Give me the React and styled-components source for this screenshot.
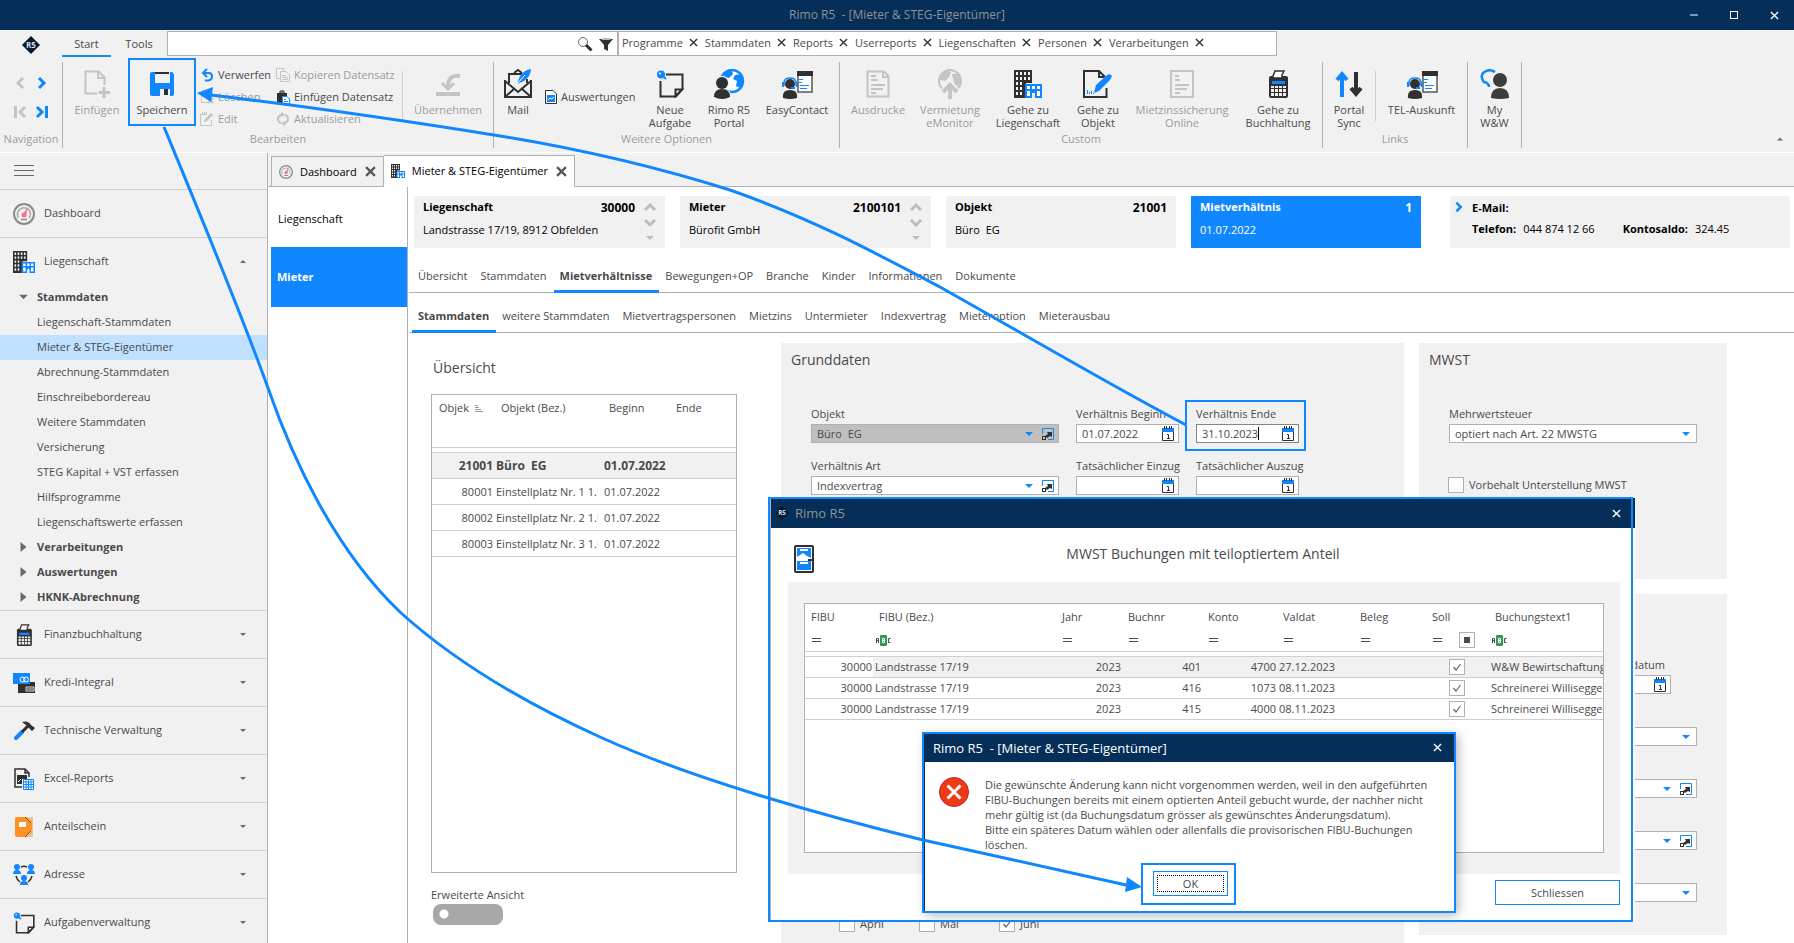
import React from "react";
import styled, { createGlobalStyle, css } from "styled-components";

const BLUE = "#1087ff";
const NAVY = "#052e58";
const GREY = "#f1f1f1";
const LINE = "#b1b1b1";
const SOFT = "#cfcfcf";
const TEXT = "#4a4a4a";
const MUTED = "#9b9b9b";
const DARK = "#303030";
const PALE = "#c4c4c4";

const GlobalStyle = createGlobalStyle`
    * {
        box-sizing: border-box;
    }
    body {
        margin: 0;
        background: white;
        color: ${TEXT};
        font-family: "Open Sans", "Noto Sans", sans-serif;
        font-size: 11px;
        line-height: 14px;
    }
    button, input, select {
        margin: 0;
        padding: 0;
        border: 0;
        background: none;
        color: inherit;
        font: inherit;
    }
    svg {
        display: block;
        flex: none;
    }
    a {
        color: inherit;
        text-decoration: none;
    }
`;

/* ---------- icons ---------- */

const Svg = ({ w, h, box, children }) => (
    <svg width={w} height={h || w} viewBox={box || `0 0 ${w} ${h || w}`} fill="none" aria-hidden="true">
        {children}
    </svg>
);

const Logo = ({ size = 18 }) => (
    <Svg w={size} box="0 0 18 18">
        <path d="M9 0L18 9L9 18L0 9Z" fill="#051a30" />
        <text x="9" y="12" textAnchor="middle" fontSize="8" fontWeight="700" fill="#d8dde4" fontFamily="Open Sans, sans-serif">R5</text>
    </Svg>
);

const Cross = ({ size = 9, color = DARK, weight = 2 }) => (
    <Svg w={size} box="0 0 10 10">
        <path d="M1 1L9 9M9 1L1 9" stroke={color} strokeWidth={weight} />
    </Svg>
);

const Chevron = ({ dir = "right", color = BLUE, bar, size = 14 }) => {
    const turn = { right: 0, down: 90, left: 180, up: 270 }[dir];
    return (
        <Svg w={size} box="0 0 14 14">
            <g transform={`rotate(${turn} 7 7)`} stroke={color} strokeWidth="3">
                <path d={bar ? "M2 2L7 7L2 12" : "M4 2L9 7L4 12"} />
                {bar && <path d="M11.500 1V13" />}
            </g>
        </Svg>
    );
};

const Triangle = ({ dir = "down", color = "#6a6a6a", w = 6, h = 4 }) => (
    <Svg w={w} h={h} box="0 0 8 4">
        <path d={dir === "down" ? "M0 0H8L4 4Z" : "M0 4H8L4 0Z"} fill={color} />
    </Svg>
);

const SideTriangle = () => (
    <Svg w={6} h={10}>
        <path d="M0 0L6 5L0 10Z" fill="#6a6a6a" />
    </Svg>
);

const NewDocIcon = () => (
    <Svg w={28} h={30}>
        <path d="M14 24.500H2.500V2.500H15.500L21.500 8.500V16M15 3V9H21" stroke={PALE} strokeWidth="2" />
        <path d="M21 18V29M15.500 23.500H27" stroke={PALE} strokeWidth="3" />
    </Svg>
);

const FloppyIcon = () => (
    <Svg w={28}>
        <path d="M2 4Q2 2 4 2H24L26 4V24Q26 26 24 26H4Q2 26 2 24Z" fill={BLUE} />
        <rect x="7" y="2" width="15" height="11" fill={GREY} />
        <rect x="7" y="2" width="14" height="2" fill={DARK} />
        <rect x="12" y="19" width="10" height="7" fill={GREY} />
        <rect x="16" y="19" width="4" height="6" fill={DARK} />
    </Svg>
);

const UndoIcon = () => (
    <Svg w={14}>
        <path d="M7 1L3 5L7 9M3 5H9Q12 5 12 8.500T8 12.500H5" stroke={BLUE} strokeWidth="2" />
    </Svg>
);

const DeleteIcon = () => (
    <Svg w={14}>
        <path d="M9 12.500H1.500V1.500H8L11.500 5V8" stroke={PALE} />
        <path d="M8 8L13 13M13 8L8 13" stroke={PALE} strokeWidth="2" />
    </Svg>
);

const EditIcon = () => (
    <Svg w={14}>
        <path d="M11.500 8V13.500H.5V2.500H7" stroke={PALE} />
        <path d="M2 1H8" stroke={PALE} strokeWidth="2" strokeDasharray="1 1" />
        <path d="M4 10L5 7L11 1L13 3L7 9Z" fill={PALE} />
    </Svg>
);

const CopyIcon = () => (
    <Svg w={14}>
        <path d="M4 10.500H.5V.5H7.500V3" stroke={PALE} />
        <path d="M4.500 3.500H10L13.500 7V13.500H4.500ZM6 7.500H10M6 9.500H12M6 11.500H12" stroke={PALE} />
    </Svg>
);

const PasteIcon = () => (
    <Svg w={14}>
        <path d="M1 3H11V6H6V14H1Z" fill={DARK} />
        <path d="M3 3Q3 0 6 0T9 3Z" fill="#707070" />
        <path d="M6.500 6.500H11L13.500 9V13.500H6.500Z" stroke={BLUE} fill="white" />
        <path d="M8 9.500H10M8 11.500H12" stroke={BLUE} />
    </Svg>
);

const RefreshIcon = () => (
    <Svg w={14}>
        <path d="M5 11Q2 10 2 7T6 2.500M9 3Q12 4 12 7T8 11.500" stroke={PALE} strokeWidth="2" />
        <path d="M5 0L9 2.500L5 5ZM9 9L5 11.500L9 14Z" fill={PALE} />
    </Svg>
);

const TakeOverIcon = () => (
    <Svg w={28}>
        <path d="M26 6Q14 4 14 17" stroke={PALE} strokeWidth="4" />
        <path d="M8 13L14 19L20 13" stroke={PALE} strokeWidth="3" />
        <path d="M2 24H26" stroke={PALE} strokeWidth="4" />
    </Svg>
);

const MailIcon = () => (
    <Svg w={28} h={30}>
        <path d="M1 11V28H27V11M1 28L11 19M27 28L17 19M1 12L14 23L27 12M5 14V5H18M10 4L14 1L18 4M23 10V14" stroke={DARK} strokeWidth="2" />
        <path d="M13 15L16 7Q20 1 27 0Q27 7 20 12Z" fill={BLUE} />
        <path d="M13 15L21 6" stroke="white" />
    </Svg>
);

const ReportIcon = () => (
    <Svg w={12} h={14}>
        <path d="M.5 .5H8L11.500 4V13.500H.5Z" stroke={DARK} fill="white" />
        <rect x="2" y="5" width="8" height="7" fill={BLUE} />
        <path d="M3 10L5 8L7 9L9 7" stroke="white" />
    </Svg>
);

const TaskIcon = ({ size = 28 }) => (
    <Svg w={size} box="0 0 28 28">
        <path d="M10 4.500H26.500V19L20 26.500H4.500V11" stroke={DARK} strokeWidth="2" />
        <path d="M26 19.500H19.500V26Z" stroke={DARK} strokeWidth="2" fill="white" />
        <circle cx="5" cy="4.500" r="4" fill={BLUE} />
        <path d="M6 5L10 9" stroke={BLUE} strokeWidth="2" />
        <circle cx="4" cy="3.500" r="1" fill="white" />
    </Svg>
);

const GlobePersonIcon = () => (
    <Svg w={32} h={30}>
        <circle cx="19" cy="12" r="11" fill="white" stroke={BLUE} strokeWidth="2.500" />
        <path d="M10 4Q14 1 19 2L20 5L16 9L12 8ZM22 6L28 5L30 12L27 19L23 17L24 12L20 10Z" fill={BLUE} />
        <path d="M1 30Q0 19 9 19T19 30Z" fill={GREY} />
        <circle cx="9" cy="14" r="7" fill={GREY} />
        <circle cx="9" cy="14" r="6" fill={DARK} />
        <path d="M1 28Q1 20 9 20T17 28Q13 30 9 30T1 28Z" fill={DARK} />
    </Svg>
);

const ContactIcon = () => (
    <Svg w={32} h={30}>
        <path d="M17 3H31V23H17Z" fill="white" stroke="#555" strokeWidth="1.500" />
        <rect x="16" y="2" width="16" height="5" fill={DARK} />
        <path d="M18 10.500H22M18 13.500H21M19 16.500H28M19 19.500H26" stroke={BLUE} />
        <circle cx="9" cy="15" r="7" fill={GREY} />
        <path d="M3 17V14Q3 9 9 9T15 14V17" stroke={BLUE} strokeWidth="1.500" />
        <circle cx="9" cy="15" r="5" fill={DARK} />
        <path d="M2 29Q1 21 9 21T16 29Q9 31 2 29Z" fill={DARK} />
        <path d="M1 13H3V18H1ZM15 13H17V18H15ZM10 18H14V20H10Z" fill={BLUE} />
    </Svg>
);

const PrintoutIcon = () => (
    <Svg w={24} h={28}>
        <path d="M1.500 1.500H18L22.500 6V26.500H1.500ZM17 2V7H22" stroke={PALE} strokeWidth="2" />
        <path d="M5 6H10M5 10H12M5 15H19M5 19H17M5 23H10" stroke={PALE} strokeWidth="2" />
    </Svg>
);

const FormIcon = () => (
    <Svg w={24} h={28}>
        <path d="M1 1H23V27H1Z" stroke={PALE} strokeWidth="2" />
        <path d="M5 6H9M5 10H10M5 15H19M5 19H17M5 23H10" stroke={PALE} strokeWidth="2" />
    </Svg>
);

const GlobeUpIcon = () => (
    <Svg w={26} h={30}>
        <circle cx="13" cy="12" r="11" stroke={PALE} strokeWidth="2" />
        <path d="M4 5Q9 0 14 3L12 8L8 12L3 11ZM15 5L22 5L24 12L21 18L17 14Z" fill={PALE} />
        <path d="M13 30V18M6 23L13 16L20 23" stroke={GREY} strokeWidth="7" />
        <path d="M13 30V18M6 23L13 16L20 23" stroke={PALE} strokeWidth="4" />
    </Svg>
);

const BuildingIcon = ({ size = 28 }) => (
    <Svg w={size} box="0 0 28 28">
        <path d="M0 0H18V13H12V28H0Z" fill={DARK} />
        <path d="M2 2H4V5H2ZM6 2H8V5H6ZM10 2H12V5H10ZM14 2H16V5H14ZM2 7H4V10H2ZM6 7H8V10H6ZM10 7H12V10H10ZM14 7H16V10H14ZM2 12H4V15H2ZM6 12H8V15H6ZM2 17H4V20H2ZM6 17H8V20H6ZM2 22H4V25H2ZM6 22H8V25H6Z" fill={GREY} />
        <path d="M11 14H28V28H21V23H18V28H11Z" fill={BLUE} />
        <path d="M13 16H16V19H13ZM18 16H21V19H18ZM23 16H26V19H23ZM13 21H16V26H13ZM23 21H26V26H23Z" fill="white" />
    </Svg>
);

const SignIcon = () => (
    <Svg w={30} h={28}>
        <path d="M23.500 18V27H1V1H16L22 7M16 1V7H21" stroke={DARK} strokeWidth="2" />
        <path d="M11 23L13 15L24 5Q27 3 29 6Q28 9 26 11L16 21Z" fill={BLUE} />
        <path d="M4.500 24V20M6.500 24V22M8.500 24V21M10.500 24V23" stroke={BLUE} />
    </Svg>
);

const CalculatorIcon = ({ size = 28 }) => (
    <Svg w={size} box="0 0 28 28">
        <rect x="5" y="6" width="19" height="22" rx="2" fill={DARK} />
        <path d="M9 8V6L11 1H20L18 5V8Z" fill="white" stroke={DARK} strokeWidth="1.500" />
        <rect x="8" y="11" width="13" height="3" fill={BLUE} />
        <path d="M7 16H10V18H7ZM11 16H14V18H11ZM15 16H18V18H15ZM19 16H22V18H19ZM7 19H10V22H7ZM11 19H14V22H11ZM15 19H18V22H15ZM19 19H22V22H19ZM7 23H10V26H7ZM11 23H14V26H11ZM15 23H18V26H15ZM19 23H22V26H19Z" fill={GREY} />
    </Svg>
);

const SyncIcon = () => (
    <Svg w={28}>
        <path d="M7 27V5M2 10L7 4L12 10" stroke={BLUE} strokeWidth="4" />
        <path d="M21 2V23M16 18L21 24L26 18" stroke={DARK} strokeWidth="4" />
    </Svg>
);

const ChatIcon = () => (
    <Svg w={30}>
        <path d="M9 18Q9 14 4 13Q0 8 3 4Q9 -1 15 3" stroke={BLUE} strokeWidth="2.500" />
        <circle cx="20" cy="11" r="7" fill="#3c3c3c" />
        <path d="M11 29Q11 19 20 19T29 29Q20 31 11 29Z" fill="#3c3c3c" />
    </Svg>
);

const GaugeIcon = ({ size = 22 }) => (
    <Svg w={size} box="0 0 22 22">
        <circle cx="11" cy="11" r="10" stroke="#8a8a8a" strokeWidth="2" fill={GREY} />
        <path d="M5 15Q3 8 8 5.500T17 8Q18 12 16 15" stroke="#aaa" strokeWidth="1.500" />
        <path d="M15 4L13 13L9 12Z" fill="#f0788c" />
        <circle cx="11" cy="12" r="2.500" fill="#f0788c" />
        <path d="M8 16.500H14" stroke="#8a8a8a" strokeWidth="1.500" />
    </Svg>
);

const CardsIcon = () => (
    <Svg w={22} h={20}>
        <rect x="5" y="9" width="17" height="11" fill={DARK} />
        <rect x="0" y="0" width="17" height="11" fill={BLUE} />
        <circle cx="9.500" cy="6.500" r="2.500" stroke="white" />
        <circle cx="13" cy="6.500" r="2.500" stroke="white" />
        <path d="M13 14H21V18H13ZM14 16H20" stroke="#ddd" />
    </Svg>
);

const HammerIcon = () => (
    <Svg w={22} h={20}>
        <path d="M3 17L9 11" stroke={BLUE} strokeWidth="4" strokeLinecap="round" />
        <path d="M9 11L16 4" stroke={DARK} strokeWidth="3" />
        <path d="M9 1Q15 -1 18 4L22 7L19 10L16 7L13 4Z" fill={DARK} />
    </Svg>
);

const ExcelIcon = () => (
    <Svg w={22}>
        <path d="M9 19H2V1H12L16 5V9M12 1V5H16" stroke={DARK} strokeWidth="1.500" />
        <path d="M4 7H14V11H9V16H4Z" fill={DARK} />
        <path d="M5 14L8 11" stroke="white" />
        <path d="M10.500 11.500H20.500V21.500H10.500ZM10.500 14H20.500M10.500 16.500H20.500M10.500 19H20.500M13 11.500V21.500M15.500 11.500V21.500M18 11.500V21.500" stroke={BLUE} fill="white" />
    </Svg>
);

const FolderIcon = () => (
    <Svg w={22}>
        <path d="M2 3Q2 1 4 1H13L19 7V14L13 21H4Q2 21 2 19Z" fill="#ff9123" />
        <rect x="6" y="6" width="7" height="5" fill="white" />
        <path d="M14 1L19 6M14 21L19 16M17 1V4M19 1V21M17 21V18" stroke="#ff9123" />
        <path d="M12 1L18 7M12 21L18 15" stroke="#555" />
    </Svg>
);

const PeopleIcon = () => (
    <Svg w={22}>
        <path d="M8 3Q11 1.500 14 3M3 12Q4 16 7 18M19 12Q18 16 15 18" stroke={DARK} strokeWidth="1.500" />
        {[[4, 3], [18, 3], [11, 14]].map(([x, y]) => (
            <g key={x} fill={BLUE}>
                <circle cx={x} cy={y} r="3" />
                <path d={`M${x - 4} ${y + 7}Q${x - 4} ${y + 3} ${x} ${y + 3}T${x + 4} ${y + 7}Z`} />
            </g>
        ))}
    </Svg>
);

const SearchIcon = () => (
    <Svg w={16}>
        <circle cx="6" cy="6" r="4.500" stroke="#666" />
        <path d="M9 9L14.500 14.500" stroke={DARK} strokeWidth="3" />
    </Svg>
);

const FilterIcon = () => (
    <Svg w={14}>
        <path d="M0 2H14L9 8V14L5 12V8Z" fill={DARK} />
        <ellipse cx="7" cy="2" rx="5" ry="1" fill="#bbb" />
    </Svg>
);

const CalendarIcon = () => (
    <Svg w={12} h={15}>
        <path d="M.5 5V14.500H11.500V5" stroke={DARK} fill="white" />
        <path d="M0 2H12V6H0Z" fill={BLUE} />
        <path d="M2.500 0V3M4.500 0V3M7.500 0V3M9.500 0V3" stroke={DARK} />
        <path d="M5 8.500H6.500V12M5 12.500H8" stroke={DARK} />
    </Svg>
);

const JumpIcon = () => (
    <Svg w={12}>
        <path d="M.5 6V.5H11.500V11.500H6" stroke={BLUE} />
        <path d="M5 4H10V9L8 8L5 10L3 8L6 6Z" fill={DARK} />
        <rect x=".5" y="8.500" width="3" height="3" stroke={DARK} />
    </Svg>
);

const SortIcon = () => (
    <Svg w={8} h={7}>
        <path d="M0 .5H3M0 2.500H4M0 4.500H6M0 6.500H8" stroke="#999" />
    </Svg>
);

const CabinetIcon = () => (
    <Svg w={20} h={28}>
        <rect x="1" y="1" width="18" height="26" rx="1" stroke={DARK} strokeWidth="2" fill="white" />
        <path d="M3 3H17V13L13 11L9 8L3 12Z" fill={BLUE} />
        <rect x="3" y="16" width="14" height="9" fill={BLUE} />
        <path d="M6 5H14M6 18H14" stroke="white" strokeWidth="2" />
        <path d="M14 15H20" stroke={DARK} strokeWidth="2" />
    </Svg>
);

const AbcIcon = () => (
    <Svg w={15} h={11}>
        <rect x="4" y="0" width="7" height="11" rx="1" fill="#35945c" />
        <path d="M.5 8V3.500H2.500V8M.5 5.500H2.500M14.500 3.500H12.500V7.500H14.500" stroke={TEXT} />
        <path d="M6.500 3.500H8.500V7.500H6.500ZM6.500 5.500H8.500" stroke="white" />
    </Svg>
);

const EqualIcon = () => (
    <Svg w={9} h={4}>
        <path d="M0 .5H9M0 3.500H9" stroke={TEXT} />
    </Svg>
);

const ErrorIcon = () => (
    <Svg w={30}>
        <circle cx="15" cy="15" r="14.500" fill="#ee3a17" stroke="#b92a10" />
        <path d="M8.500 8.500L21.500 21.500M21.500 8.500L8.500 21.500" stroke="white" strokeWidth="3" />
    </Svg>
);

/* ---------- shell ---------- */

const Shell = styled.div`
    position: relative;
    display: flex;
    flex-direction: column;
    height: 100vh;
    overflow: hidden;
    background: ${GREY};
`;

const TitleBar = styled.header`
    display: grid;
    grid-template-columns: 1fr auto 1fr;
    align-items: center;
    height: 30px;
    flex: none;
    background: ${NAVY};
    color: #8f9296;
    font-size: 12px;
    white-space: pre;
`;

const WindowButtons = styled.div`
    grid-column: 3;
    justify-self: end;
    display: flex;
    button {
        display: flex;
        align-items: center;
        justify-content: center;
        width: 40px;
        height: 28px;
    }
`;

const WindowTitle = styled.span`
    grid-column: 2;
`;

const TabStrip = styled.div`
    display: flex;
    height: 27px;
    flex: none;
`;

const LogoCell = styled.div`
    display: flex;
    align-items: center;
    justify-content: center;
    width: 62px;
    padding-top: 3px;
`;

const RibbonTab = styled.button`
    width: ${props => props.$w}px;
    padding-top: 2px;
    border-bottom: 2px solid ${props => props.$active ? BLUE : "transparent"};
`;

const SearchBox = styled.div`
    display: flex;
    align-items: center;
    gap: 6px;
    width: 451px;
    margin-top: 1px;
    height: 25px;
    padding-right: 4px;
    border: 1px solid ${LINE};
    background: white;
    input {
        flex: 1;
        min-width: 0;
    }
`;

const Chips = styled.div`
    display: flex;
    align-items: center;
    gap: 7px;
    width: 659px;
    height: 25px;
    margin-top: 1px;
    padding: 0 0 2px 3px;
    border: 1px solid ${LINE};
    background: white;
`;

const Chip = styled.button`
    display: flex;
    align-items: center;
    gap: 6px;
`;

/* ---------- ribbon ---------- */

const RibbonBar = styled.div`
    display: flex;
    height: 96px;
    flex: none;
    padding: 5px 0 4px;
    border-bottom: 1px solid white;
`;

const RibbonGroup = styled.section`
    display: flex;
    flex-direction: column;
    width: ${props => props.$w}px;
    border-right: 1px solid ${LINE};
`;

const GroupBody = styled.div`
    display: flex;
    height: 70px;
`;

const GroupName = styled.div`
    color: ${MUTED};
    text-align: center;
    white-space: nowrap;
`;

const BigButton = styled.button`
    position: relative;
    display: flex;
    flex-direction: column;
    align-items: center;
    gap: 5px;
    width: ${props => props.$w}px;
    padding-top: 8px;
    line-height: 13px;
    white-space: pre;
    color: ${props => props.disabled ? MUTED : TEXT};
`;

const IconSlot = styled.span`
    display: flex;
    align-items: center;
    justify-content: center;
    height: 28px;
`;

const SmallColumn = styled.div`
    display: flex;
    flex-direction: column;
    justify-content: ${props => props.$middle ? "center" : "flex-start"};
    width: ${props => props.$w}px;
    padding: ${props => props.$middle ? 0 : 2}px 0 0 ${props => props.$pad || 0}px;
`;

const SmallButton = styled.button`
    display: flex;
    align-items: center;
    gap: 4px;
    height: 22px;
    white-space: nowrap;
    color: ${props => props.disabled ? MUTED : TEXT};
`;

const Divider = styled.span`
    width: 1px;
    height: 50px;
    margin-top: 9px;
    background: ${SOFT};
`;

const NavGrid = styled.div`
    display: grid;
    grid-template-columns: 22px 22px;
    grid-template-rows: 29px 29px;
    padding: 6px 0 0 9px;
    button {
        display: flex;
        align-items: center;
        justify-content: center;
    }
`;

const GroupSpace = styled(GroupBody)`
    padding-left: 3px;
`;

const RibbonEnd = styled.button`
    margin: 74px 11px 0 auto;
    height: 6px;
`;

const Marker = styled.span`
    position: absolute;
    inset: ${props => props.$inset};
    border: 2px solid ${BLUE};
    pointer-events: none;
    z-index: 2;
`;

const Big = ({ icon, label, w, disabled, marked }) => (
    <BigButton $w={w} disabled={disabled}>
        <IconSlot>{icon}</IconSlot>
        <span>{label}</span>
        {marked && <Marker $inset="-4px 0 6px 0" />}
    </BigButton>
);

const Small = ({ icon, label, disabled }) => (
    <SmallButton disabled={disabled}>
        {icon}
        {label}
    </SmallButton>
);

const chips = ["Programme", "Stammdaten", "Reports", "Userreports", "Liegenschaften", "Personen", "Verarbeitungen"];

const Ribbon = () => (
    <>
        <TabStrip>
            <LogoCell><Logo /></LogoCell>
            <RibbonTab $w={49} $active>Start</RibbonTab>
            <RibbonTab $w={56}>Tools</RibbonTab>
            <SearchBox>
                <input type="text" aria-label="Suche" />
                <SearchIcon />
                <FilterIcon />
            </SearchBox>
            <Chips>
                {chips.map(name => (
                    <Chip key={name}>{name}<Cross weight={1.5} /></Chip>
                ))}
            </Chips>
        </TabStrip>
        <RibbonBar>
            <RibbonGroup $w={63}>
                <GroupBody>
                    <NavGrid>
                        <button aria-label="Zurück"><Chevron dir="left" color={PALE} /></button>
                        <button aria-label="Weiter"><Chevron /></button>
                        <button aria-label="Erster"><Chevron dir="left" color={PALE} bar /></button>
                        <button aria-label="Letzter"><Chevron bar /></button>
                    </NavGrid>
                </GroupBody>
                <GroupName>Navigation</GroupName>
            </RibbonGroup>
            <RibbonGroup $w={431}>
                <GroupSpace>
                    <Big w={62} icon={<NewDocIcon />} label="Einfügen" disabled />
                    <Big w={68} icon={<FloppyIcon />} label="Speichern" marked />
                    <SmallColumn $w={80} $pad={4}>
                        <Small icon={<UndoIcon />} label="Verwerfen" />
                        <Small icon={<DeleteIcon />} label="Löschen" disabled />
                        <Small icon={<EditIcon />} label="Edit" disabled />
                    </SmallColumn>
                    <SmallColumn $w={126}>
                        <Small icon={<CopyIcon />} label="Kopieren Datensatz" disabled />
                        <Small icon={<PasteIcon />} label="Einfügen Datensatz" />
                        <Small icon={<RefreshIcon />} label="Aktualisieren" disabled />
                    </SmallColumn>
                    <Divider />
                    <Big w={90} icon={<TakeOverIcon />} label="Übernehmen" disabled />
                </GroupSpace>
                <GroupName>Bearbeiten</GroupName>
            </RibbonGroup>
            <RibbonGroup $w={346}>
                <GroupBody>
                    <Big w={48} icon={<MailIcon />} label="Mail" />
                    <SmallColumn $w={98} $pad={3} $middle>
                        <Small icon={<ReportIcon />} label="Auswertungen" />
                    </SmallColumn>
                    <Big w={60} icon={<TaskIcon />} label={"Neue\nAufgabe"} />
                    <Big w={58} icon={<GlobePersonIcon />} label={"Rimo R5\nPortal"} />
                    <Big w={78} icon={<ContactIcon />} label="EasyContact" />
                </GroupBody>
                <GroupName>Weitere Optionen</GroupName>
            </RibbonGroup>
            <RibbonGroup $w={483}>
                <GroupBody>
                    <Big w={76} icon={<PrintoutIcon />} label="Ausdrucke" disabled />
                    <Big w={68} icon={<GlobeUpIcon />} label={"Vermietung\neMonitor"} disabled />
                    <Big w={88} icon={<BuildingIcon />} label={"Gehe zu\nLiegenschaft"} />
                    <Big w={52} icon={<SignIcon />} label={"Gehe zu\nObjekt"} />
                    <Big w={116} icon={<FormIcon />} label={"Mietzinssicherung\nOnline"} disabled />
                    <Big w={76} icon={<CalculatorIcon />} label={"Gehe zu\nBuchhaltung"} />
                </GroupBody>
                <GroupName>Custom</GroupName>
            </RibbonGroup>
            <RibbonGroup $w={145}>
                <GroupBody>
                    <Big w={52} icon={<SyncIcon />} label={"Portal\nSync"} />
                    <Divider />
                    <Big w={91} icon={<ContactIcon />} label="TEL-Auskunft" />
                </GroupBody>
                <GroupName>Links</GroupName>
            </RibbonGroup>
            <RibbonGroup $w={54}>
                <GroupBody>
                    <Big w={53} icon={<ChatIcon />} label={"My\nW&W"} />
                </GroupBody>
            </RibbonGroup>
            <RibbonEnd aria-label="Menüband einklappen"><Triangle dir="up" /></RibbonEnd>
        </RibbonBar>
    </>
);

/* ---------- sidebar ---------- */

const Main = styled.div`
    display: flex;
    flex: 1;
    min-height: 0;
`;

const Sidebar = styled.nav`
    width: 268px;
    flex: none;
    border-right: 1px solid ${LINE};
    overflow: hidden;
`;

const MenuToggle = styled.button`
    display: flex;
    flex-direction: column;
    gap: 4px;
    width: 100%;
    height: 37px;
    padding: 12px 14px;
    border-bottom: 1px solid ${SOFT};
    span {
        width: 20px;
        height: 1px;
        background: #666;
    }
`;

const Module = styled.button`
    display: flex;
    align-items: center;
    gap: 9px;
    width: 100%;
    height: ${props => props.$open ? 47 : 48}px;
    padding: 0 21px 0 13px;
    border-bottom: ${props => props.$open ? "none" : "1px solid " + SOFT};
    text-align: left;
    span {
        flex: 1;
        padding-bottom: 2px;
    }
`;

const Tree = styled.div`
    border-bottom: 1px solid ${SOFT};
`;

const Branch = styled.button`
    display: flex;
    align-items: center;
    gap: 9px;
    width: 100%;
    height: 25px;
    padding: 0 0 1px 19px;
    font-weight: 700;
    svg {
        width: 9px;
    }
`;

const Leaf = styled.a`
    display: block;
    height: 25px;
    padding-left: 37px;
    line-height: 24px;
    background: ${props => props.$active ? "#bfe0ff" : "none"};
`;

const leaves = [
    "Liegenschaft-Stammdaten",
    "Mieter & STEG-Eigentümer",
    "Abrechnung-Stammdaten",
    "Einschreibebordereau",
    "Weitere Stammdaten",
    "Versicherung",
    "STEG Kapital + VST erfassen",
    "Hilfsprogramme",
    "Liegenschaftswerte erfassen",
];

const modules = [
    ["Finanzbuchhaltung", <CalculatorIcon size={22} />],
    ["Kredi-Integral", <CardsIcon />],
    ["Technische Verwaltung", <HammerIcon />],
    ["Excel-Reports", <ExcelIcon />],
    ["Anteilschein", <FolderIcon />],
    ["Adresse", <PeopleIcon />],
    ["Aufgabenverwaltung", <TaskIcon size={22} />],
];

const SideNav = () => (
    <Sidebar>
        <MenuToggle aria-label="Menü"><span /><span /><span /></MenuToggle>
        <Module><GaugeIcon /><span>Dashboard</span></Module>
        <Module $open><BuildingIcon size={22} /><span>Liegenschaft</span><Triangle dir="up" h={3} /></Module>
        <Tree>
            <Branch><Triangle w={10} h={6} />Stammdaten</Branch>
            {leaves.map(name => (
                <Leaf key={name} href="#" $active={name.startsWith("Mieter")}>{name}</Leaf>
            ))}
            {["Verarbeitungen", "Auswertungen", "HKNK-Abrechnung"].map(name => (
                <Branch key={name}><SideTriangle />{name}</Branch>
            ))}
        </Tree>
        {modules.map(([name, icon]) => (
            <Module key={name}>{icon}<span>{name}</span><Triangle h={3} /></Module>
        ))}
    </Sidebar>
);

/* ---------- document area ---------- */

const DocArea = styled.div`
    display: flex;
    flex-direction: column;
    flex: 1;
    min-width: 0;
`;

const DocTabs = styled.div`
    display: flex;
    align-items: flex-end;
    height: 34px;
    flex: none;
    padding-left: 3px;
    box-shadow: inset 0 -1px 0 ${LINE};
    color: black;
`;

const DocTab = styled.button`
    display: flex;
    align-items: center;
    gap: 7px;
    height: ${props => props.$active ? 32 : 31}px;
    padding: 0 7px;
    border: 1px solid ${LINE};
    background: ${props => props.$active ? "white" : GREY};
    ${props => props.$active && css`
        border-left: none;
        border-bottom-color: white;
    `}
    svg:last-child {
        margin-left: 1px;
    }
`;

const DocBody = styled.div`
    display: flex;
    flex: 1;
    min-height: 0;
    background: white;
`;

const LevelList = styled.div`
    width: 140px;
    flex: none;
    padding-left: 3px;
    border-right: 1px solid ${LINE};
`;

const Level = styled.button`
    display: block;
    width: 100%;
    height: 60px;
    padding: 4px 0 0 7px;
    text-align: left;
    color: black;
    ${props => props.$active && css`
        padding: 0 0 0 6px;
        background: ${BLUE};
        color: white;
        font-weight: 700;
    `}
`;

const Page = styled.main`
    display: flex;
    flex-direction: column;
    flex: 1;
    min-width: 0;
`;

const Cards = styled.div`
    display: flex;
    gap: 15px;
    padding: 9px 4px 0 6px;
    color: black;
`;

const Card = styled.section`
    display: flex;
    justify-content: space-between;
    width: ${props => props.$w}px;
    height: 52px;
    padding: 4px 9px 0;
    background: ${props => props.$active ? BLUE : GREY};
    color: ${props => props.$active ? "white" : "black"};
`;

const CardText = styled.div`
    display: flex;
    flex-direction: column;
    gap: 9px;
    white-space: pre;
`;

const CardNumber = styled.strong`
    margin-left: auto;
    padding-top: 1px;
    font-size: 12px;
`;

const Stepper = styled.div`
    display: flex;
    flex-direction: column;
    align-items: center;
    gap: 2px;
    width: 30px;
    margin-right: -9px;
    svg:last-child {
        margin-top: 4px;
    }
`;

const ContactCard = styled.section`
    display: flex;
    gap: 7px;
    flex: 1;
    height: 52px;
    margin-left: 14px;
    padding: 5px 3px 0;
    background: ${GREY};
`;

const ContactLines = styled.dl`
    display: grid;
    grid-template-columns: auto auto;
    align-content: start;
    gap: 7px 28px;
    margin: 0;
    div {
        display: flex;
        gap: 7px;
    }
    div:first-child {
        grid-column: 1 / 3;
    }
    dt {
        font-weight: 700;
    }
    dd {
        margin: 0;
    }
`;

const PageTabs = styled.div`
    display: flex;
    height: ${props => props.$h}px;
    flex: none;
    margin-left: 1px;
    padding-left: 3px;
    box-shadow: inset 0 -1px 0 ${LINE};
`;

const PageTab = styled.button`
    padding: ${props => props.$low ? 9 : 14}px 7px 0 6px;
    border-bottom: 3px solid ${props => props.$active ? BLUE : "transparent"};
    font-weight: ${props => props.$active ? 700 : 400};
    white-space: nowrap;
`;

const Columns = styled.div`
    display: flex;
    flex: 1;
    min-height: 0;
    padding: 0 67px 0 23px;
`;

const Heading = styled.h2`
    margin: 0;
    font-size: 14px;
    font-weight: 400;
    line-height: 18px;
`;

const Overview = styled.section`
    display: flex;
    flex-direction: column;
    width: 306px;
    flex: none;
    margin-right: 44px;
    padding: 26px 0 18px;
    h2 {
        padding: 0 2px 17px;
    }
`;

const GridBox = styled.div`
    flex: 1;
    min-height: 0;
    border: 1px solid ${LINE};
    background: white;
    overflow: hidden;
`;

const Table = styled.table`
    width: 100%;
    table-layout: fixed;
    border-spacing: 0;
    white-space: pre;
    th {
        padding: ${props => props.$headPad};
        text-align: left;
        vertical-align: top;
        font-weight: 400;
    }
    td {
        height: ${props => props.$rowHeight}px;
        padding: 0 1px 0 2px;
        border-bottom: 1px solid ${SOFT};
        overflow: hidden;
    }
    tbody tr:first-child td {
        height: 5px;
    }
`;

const OverviewTable = styled(Table)`
    th {
        height: 53px;
        border-bottom: 1px solid ${SOFT};
    }
    th svg {
        display: inline-block;
        margin-left: 6px;
    }
    tbody tr:nth-child(2) {
        background: ${GREY};
        font-size: 12px;
        font-weight: 700;
    }
`;

const Cell = styled.td`
    text-align: ${props => props.$right ? "right" : "left"};
`;

const Clip = styled.span`
    display: block;
    width: ${props => props.$w}px;
    overflow: hidden;
`;

const ToggleLabel = styled.label`
    padding-top: 13px;
    line-height: 18px;
`;

const Toggle = styled.input`
    appearance: none;
    width: 70px;
    height: 21px;
    margin-left: 2px;
    border-radius: 8px;
    background: radial-gradient(circle at 11px 10px, white 4px, #a8a8a8 5px);
`;

const Panel = styled.section`
    display: flex;
    flex-direction: column;
    padding: 8px 0 11px 30px;
    background: ${GREY};
    h2 {
        margin: 0 0 36px -20px;
    }
`;

const BasePanel = styled(Panel)`
    flex: 1;
    margin-top: 10px;
`;

const SideColumn = styled.div`
    display: flex;
    flex-direction: column;
    gap: 15px;
    width: 308px;
    margin: 10px 0 8px 15px;
`;

const TaxPanel = styled(Panel)`
    flex: 0 0 236px;
`;

const TermPanel = styled(Panel)`
    flex: 1;
    padding-top: 62px;
`;

const FieldGrid = styled.div`
    display: grid;
    grid-template-columns: 248px 103px 103px;
    gap: 14px 17px;
`;

const FieldStack = styled.div`
    display: grid;
    grid-template-columns: 248px;
    gap: 14px;
`;

const FieldBox = styled.div`
    position: relative;
    display: flex;
    flex-direction: column;
    width: ${props => props.$w ? props.$w + "px" : "auto"};
    label {
        height: 19px;
        padding-right: ${props => props.$labelEnd ? 6 : 0}px;
        line-height: 18px;
        white-space: nowrap;
        text-align: ${props => props.$labelEnd ? "right" : "left"};
    }
`;

const Control = styled.div`
    display: flex;
    align-items: center;
    height: 19px;
    padding: 0 4px 0 5px;
    border: 1px solid ${props => props.$focus ? "#858585" : LINE};
    background: ${props => props.$off ? "#bfbfbf" : "white"};
    line-height: 15px;
    select {
        flex: 1;
        min-width: 0;
        appearance: none;
        color: inherit;
        opacity: 1;
    }
    input {
        field-sizing: content;
        max-width: 70px;
    }
    button {
        margin-left: 9px;
    }
`;

const DateButton = styled.button`
    && {
        margin-left: auto;
    }
`;

const Caret = styled.span`
    width: 1px;
    height: 13px;
    background: black;
`;

const JumpGap = styled.span`
    width: 2px;
`;

const SelectField = ({ id, label, name, value, off, jump }) => (
    <FieldBox>
        <label htmlFor={id}>{label}</label>
        <Control $off={off}>
            <select id={id} aria-label={name} disabled={off} defaultValue={value}>
                <option value={value}>{value}</option>
            </select>
            <Triangle color={BLUE} w={8} />
            {jump ? <button aria-label="Öffnen"><JumpIcon /></button> : <JumpGap />}
        </Control>
    </FieldBox>
);

const DateField = ({ id, label, value = "", focus, w, labelEnd }) => (
    <FieldBox $w={w} $labelEnd={labelEnd}>
        <label htmlFor={id}>{label}</label>
        <Control $focus={focus}>
            <input id={id} type="text" defaultValue={value} />
            {focus && <Caret />}
            <DateButton aria-label="Kalender"><CalendarIcon /></DateButton>
        </Control>
        {focus && <Marker $inset="-5px -7px -8px -11px" />}
    </FieldBox>
);

const Check = styled.label`
    display: flex;
    align-items: center;
    gap: 5px;
`;

const CheckBox = styled.input`
    appearance: none;
    display: block;
    width: 16px;
    height: 16px;
    border: 1px solid ${LINE};
    background: white;
    &:checked {
        background: white url("data:image/svg+xml,%3Csvg xmlns='http://www.w3.org/2000/svg' viewBox='0 0 14 14'%3E%3Cpath d='M3.500 7L6 10L10.500 4' fill='none' stroke='%23666' stroke-width='1.2'/%3E%3C/svg%3E");
    }
`;

const FilterBox = styled(CheckBox)`
    background: linear-gradient(${TEXT}, ${TEXT}) center / 6px 6px no-repeat white;
`;

const TaxCheck = styled(Check)`
    margin: 34px 0 0 -1px;
`;

const Months = styled.div`
    display: flex;
    margin: auto 0 0 28px;
    label {
        width: 80px;
    }
`;

const levelOne = ["Übersicht", "Stammdaten", "Mietverhältnisse", "Bewegungen+OP", "Branche", "Kinder", "Informationen", "Dokumente"];
const levelTwo = ["Stammdaten", "weitere Stammdaten", "Mietvertragspersonen", "Mietzins", "Untermieter", "Indexvertrag", "Mieteroption", "Mieterausbau"];

const objects = [
    ["21001", "Büro  EG", "01.07.2022"],
    ["80001", "Einstellplatz Nr. 1 1.UG", "01.07.2022"],
    ["80002", "Einstellplatz Nr. 2 1.UG", "01.07.2022"],
    ["80003", "Einstellplatz Nr. 3 1.UG", "01.07.2022"],
];

const SummaryCard = ({ title, number, text, w, active, steps }) => (
    <Card $w={w} $active={active}>
        <CardText><strong>{title}</strong><span>{text}</span></CardText>
        <CardNumber>{number}</CardNumber>
        {steps && (
            <Stepper>
                <Chevron dir="up" color="#bdbdbd" />
                <Chevron dir="down" color="#bdbdbd" />
                <Triangle color="#bdbdbd" w={8} />
            </Stepper>
        )}
    </Card>
);

const Document = () => (
    <DocArea>
        <DocTabs>
            <DocTab><GaugeIcon size={14} />Dashboard<Cross size={11} color="#555" /></DocTab>
            <DocTab $active><BuildingIcon size={14} />Mieter & STEG-Eigentümer<Cross size={11} color="#555" /></DocTab>
        </DocTabs>
        <DocBody>
            <LevelList>
                <Level>Liegenschaft</Level>
                <Level $active>Mieter</Level>
            </LevelList>
            <Page>
                <Cards>
                    <SummaryCard w={251} title="Liegenschaft" number="30000" text="Landstrasse 17/19, 8912 Obfelden" steps />
                    <SummaryCard w={251} title="Mieter" number="2100101" text="Bürofit GmbH" steps />
                    <SummaryCard w={230} title="Objekt" number="21001" text="Büro  EG" />
                    <SummaryCard w={230} title="Mietverhältnis" number="1" text="01.07.2022" active />
                    <ContactCard>
                        <Chevron size={12} />
                        <ContactLines>
                            <div><dt>E-Mail:</dt></div>
                            <div><dt>Telefon:</dt><dd>044 874 12 66</dd></div>
                            <div><dt>Kontosaldo:</dt><dd>324.45</dd></div>
                        </ContactLines>
                    </ContactCard>
                </Cards>
                <PageTabs $h={45}>
                    {levelOne.map(name => <PageTab key={name} $active={name === "Mietverhältnisse"}>{name}</PageTab>)}
                </PageTabs>
                <PageTabs $h={40}>
                    {levelTwo.map((name, i) => <PageTab key={name} $low $active={i === 0}>{name}</PageTab>)}
                </PageTabs>
                <Columns>
                    <Overview>
                        <Heading>Übersicht</Heading>
                        <GridBox>
                            <OverviewTable $headPad="6px 0 0 7px" $rowHeight={26}>
                                <colgroup>
                                    <col style={{ width: 62 }} /><col style={{ width: 108 }} /><col style={{ width: 67 }} /><col />
                                </colgroup>
                                <thead>
                                    <tr><th>Objek<SortIcon /></th><th>Objekt (Bez.)</th><th>Beginn</th><th>Ende</th></tr>
                                </thead>
                                <tbody>
                                    <tr><td colSpan={4} /></tr>
                                    {objects.map(([no, text, begin]) => (
                                        <tr key={no}><Cell $right>{no}</Cell><Cell><Clip $w={102}>{text}</Clip></Cell><Cell>{begin}</Cell><Cell /></tr>
                                    ))}
                                </tbody>
                            </OverviewTable>
                        </GridBox>
                        <ToggleLabel htmlFor="extended">Erweiterte Ansicht</ToggleLabel>
                        <Toggle id="extended" type="checkbox" role="switch" />
                    </Overview>
                    <BasePanel>
                        <Heading>Grunddaten</Heading>
                        <FieldGrid>
                            <SelectField id="object" label="Objekt" value={"Büro\u00a0\u00a0EG"} off jump />
                            <DateField id="begin" label="Verhältnis Beginn" value="01.07.2022" />
                            <DateField id="end" label="Verhältnis Ende" value="31.10.2023" focus />
                            <SelectField id="kind" label="Verhältnis Art" value="Indexvertrag" jump />
                            <DateField id="moveIn" label="Tatsächlicher Einzug" />
                            <DateField id="moveOut" label="Tatsächlicher Auszug" />
                        </FieldGrid>
                        <Months>
                            <Check><CheckBox type="checkbox" />April</Check>
                            <Check><CheckBox type="checkbox" />Mai</Check>
                            <Check><CheckBox type="checkbox" defaultChecked />Juni</Check>
                        </Months>
                    </BasePanel>
                    <SideColumn>
                        <TaxPanel>
                            <Heading>MWST</Heading>
                            <FieldStack>
                                <SelectField id="vat" label="Mehrwertsteuer" value="optiert nach Art. 22 MWSTG" />
                            </FieldStack>
                            <TaxCheck><CheckBox type="checkbox" />Vorbehalt Unterstellung MWST</TaxCheck>
                        </TaxPanel>
                        <TermPanel>
                            <FieldStack>
                                <DateField id="termDate" label="datum" w={222} labelEnd />
                                <SelectField id="term1" name="Auswahl 1" />
                                <SelectField id="term2" name="Auswahl 2" jump />
                                <SelectField id="term3" name="Auswahl 3" jump />
                                <SelectField id="term4" name="Auswahl 4" />
                            </FieldStack>
                        </TermPanel>
                    </SideColumn>
                </Columns>
            </Page>
        </DocBody>
    </DocArea>
);

/* ---------- dialogs ---------- */

const Dialog = styled.div`
    position: absolute;
    left: 770px;
    top: 498px;
    width: 865px;
    height: 424px;
    display: flex;
    flex-direction: column;
    border-left: 1px solid ${LINE};
    background: white;
`;

const DialogBar = styled.header`
    display: flex;
    align-items: center;
    gap: 6px;
    height: ${props => props.$h}px;
    flex: none;
    padding: 0 14px 0 ${props => props.$left}px;
    background: ${NAVY};
    color: ${props => props.$bright ? "white" : "#8f9296"};
    font-size: 13px;
    white-space: pre;
    button {
        margin-left: auto;
    }
`;

const DialogHead = styled.div`
    display: grid;
    grid-template-columns: 20px 1fr 20px;
    height: 54px;
    padding: 17px 23px 0;
    h2 {
        text-align: center;
    }
`;

const DialogPanel = styled.div`
    display: flex;
    flex: 1;
    min-height: 0;
    margin: 0 15px 0 17px;
    padding: 21px 16px;
    background: ${GREY};
`;

const DialogFoot = styled.div`
    display: flex;
    justify-content: flex-end;
    padding: 6px 15px 17px;
`;

const OutlineButton = styled.button`
    width: ${props => props.$w}px;
    height: 25px;
    border: 1px solid ${BLUE};
    background: white;
`;

const BookingTable = styled(Table)`
    th {
        height: 25px;
    }
    thead tr:last-child th {
        height: 23px;
        padding-top: 0;
        vertical-align: middle;
        border-bottom: 1px solid ${SOFT};
    }
    tbody tr:nth-child(2) td + td {
        background: ${GREY};
    }
    input {
        margin-left: 21px;
    }
`;

const FilterPair = styled.div`
    display: flex;
    align-items: center;
    height: 16px;
    margin-left: ${props => props.$text ? "-3px" : "1px"};
    && input {
        margin-left: 17px;
    }
`;

const Message = styled.div`
    position: absolute;
    left: 924px;
    top: 733px;
    width: 532px;
    height: 180px;
    border-left: 1px solid ${NAVY};
    background: white;
    box-shadow: 2px 2px 10px rgba(0, 0, 0, 0.3);
`;

const MessageBody = styled.div`
    display: flex;
    gap: 16px;
    padding: 15px 10px 0 14px;
    p {
        margin: 0;
        line-height: 15px;
        white-space: pre;
    }
`;

const MessageFoot = styled.div`
    display: flex;
    justify-content: center;
    padding-top: 19px;
`;

const OkBox = styled.span`
    position: relative;
`;

const OkButton = styled(OutlineButton)`
    display: block;
    padding: 3px;
    span {
        display: block;
        height: 17px;
        border: 1px dotted black;
        line-height: 15px;
    }
`;

const Arrows = styled.svg`
    position: absolute;
    left: 0;
    top: 0;
    pointer-events: none;
    z-index: 5;
`;

const bookings = [
    ["30000", "Landstrasse 17/19", "2023", "401", "4700", "27.12.2023", "W&W Bewirtschaftung"],
    ["30000", "Landstrasse 17/19", "2023", "416", "1073", "08.11.2023", "Schreinerei Willisegger"],
    ["30000", "Landstrasse 17/19", "2023", "415", "4000", "08.11.2023", "Schreinerei Willisegger"],
];

const bookingHeads = ["FIBU", "FIBU (Bez.)", "Jahr", "Buchnr", "Konto", "Valdat", "Beleg", "Soll", "Buchungstext1"];
const bookingWidths = [68, 183, 66, 80, 75, 77, 72, 63];

const message = `Die gewünschte Änderung kann nicht vorgenommen werden, weil in den aufgeführten
FIBU-Buchungen bereits mit einem optierten Anteil gebucht wurde, der nachher nicht
mehr gültig ist (da Buchungsdatum grösser als gewünschtes Änderungsdatum).
Bitte ein späteres Datum wählen oder allenfalls die provisorischen FIBU-Buchungen
löschen.`;

const BookingDialog = () => (
    <Dialog role="dialog" aria-label="Rimo R5">
        <DialogBar $h={30} $left={4}>
            <Logo size={14} />
            <span>Rimo R5</span>
            <button aria-label="Schliessen"><Cross color="white" weight={1.5} /></button>
        </DialogBar>
        <DialogHead>
            <CabinetIcon />
            <Heading>MWST Buchungen mit teiloptiertem Anteil</Heading>
        </DialogHead>
        <DialogPanel>
            <GridBox>
                <BookingTable $headPad="6px 0 0 6px" $rowHeight={21}>
                    <colgroup>
                        {bookingWidths.map((width, i) => <col key={i} style={{ width }} />)}
                        <col />
                    </colgroup>
                    <thead>
                        <tr>{bookingHeads.map(name => <th key={name}>{name}</th>)}</tr>
                        <tr>
                            {bookingHeads.map((name, i) => (
                                <th key={name}>
                                    <FilterPair $text={i === 1 || i === 8}>
                                        {i === 1 || i === 8 ? <AbcIcon /> : <EqualIcon />}
                                        {name === "Soll" && <FilterBox type="checkbox" aria-label="Filter Soll" />}
                                    </FilterPair>
                                </th>
                            ))}
                        </tr>
                    </thead>
                    <tbody>
                        <tr><td colSpan={9} /></tr>
                        {bookings.map(row => (
                            <tr key={row[3]}>
                                <Cell $right>{row[0]}</Cell>
                                <Cell>{row[1]}</Cell>
                                <Cell $right>{row[2]}</Cell>
                                <Cell $right>{row[3]}</Cell>
                                <Cell $right>{row[4]}</Cell>
                                <Cell>{row[5]}</Cell>
                                <Cell />
                                <Cell><CheckBox type="checkbox" defaultChecked aria-label="Soll" /></Cell>
                                <Cell>{row[6]}</Cell>
                            </tr>
                        ))}
                    </tbody>
                </BookingTable>
            </GridBox>
        </DialogPanel>
        <DialogFoot>
            <OutlineButton $w={125}>Schliessen</OutlineButton>
        </DialogFoot>
        <Marker $inset="-1px 2px 0 -3px" />
    </Dialog>
);

const ErrorMessage = () => (
    <Message role="alertdialog" aria-label="Fehler">
        <DialogBar $h={29} $left={8} $bright>
            <span>{"Rimo R5  - [Mieter & STEG-Eigentümer]"}</span>
            <button aria-label="Schliessen"><Cross color="white" weight={1.5} /></button>
        </DialogBar>
        <MessageBody>
            <ErrorIcon />
            <p>{message}</p>
        </MessageBody>
        <MessageFoot>
            <OkBox>
                <OkButton $w={75}><span>OK</span></OkButton>
                <Marker $inset="-8px -8px -9px -12px" />
            </OkBox>
        </MessageFoot>
        <Marker $inset="-1px 0 0 -3px" />
    </Message>
);

export default function App() {
    return (
        <Shell>
            <GlobalStyle />
            <TitleBar>
                <WindowTitle>{"Rimo R5  - [Mieter & STEG-Eigentümer]"}</WindowTitle>
                <WindowButtons>
                    <button aria-label="Minimieren"><Svg w={8} h={2}><path d="M0 1H8" stroke="white" strokeWidth="1" /></Svg></button>
                    <button aria-label="Maximieren"><Svg w={8}><rect x=".5" y=".5" width="7" height="7" stroke="white" /></Svg></button>
                    <button aria-label="Beenden"><Cross color="white" weight={1.5} /></button>
                </WindowButtons>
            </TitleBar>
            <Ribbon />
            <Main>
                <SideNav />
                <Document />
            </Main>
            <BookingDialog />
            <ErrorMessage />
            <Arrows width="1794" height="943" viewBox="0 0 1794 943" fill="none" aria-hidden="true">
                <g stroke={BLUE} strokeWidth="3">
                    <path d="M164 127C190 190 240 310 268 388C293 460 335 550 400 612C455 662 525 703 600 737C690 778 820 815 923 840C990 855 1060 870 1126 885" />
                    <path d="M1186 425C1110 385 1020 332 940 287C870 250 810 218 730 190C660 168 580 149 500 136C400 120 310 107 211 95" />
                </g>
                <path d="M1127 877L1142 887L1125 892ZM213 87L197 93L211 102Z" fill={BLUE} />
            </Arrows>
        </Shell>
    );
}
